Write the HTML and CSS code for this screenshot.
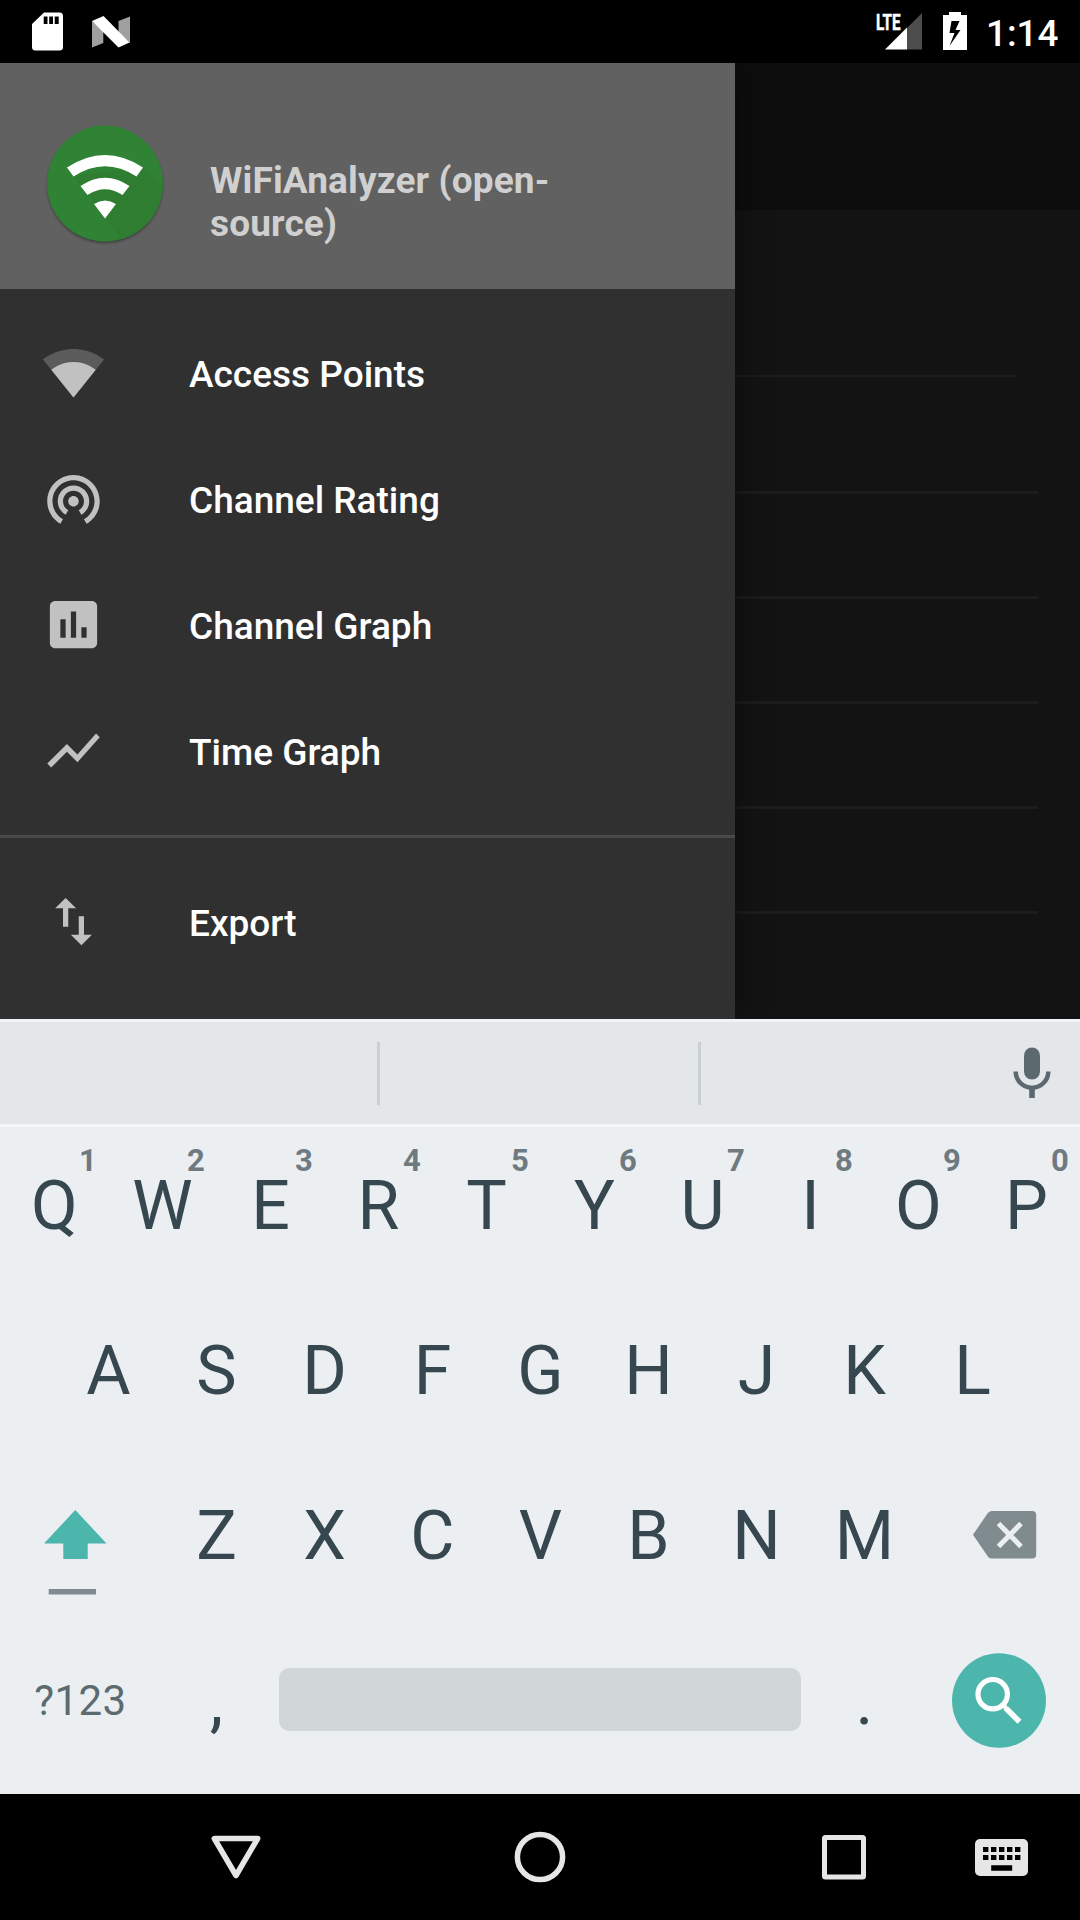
FILE: index.html
```html
<!DOCTYPE html>
<html lang="en">
<head>
<meta charset="utf-8">
<title>WiFiAnalyzer</title>
<link rel="stylesheet" href="styles.css">
</head>
<body>
<div class="screen">
  <header class="status">
    <svg class="sd" width="31" height="38" viewBox="0 0 31 38"><path fill="#fff" fill-rule="evenodd" d="M12 .5H27.500Q31 .5 31 4V35Q31 38.500 27.500 38.500H3.500Q0 38.500 0 35V12ZM11.700 4.500V12H15.500V4.500ZM17.200 4.500V12H21V4.500ZM22.700 4.500V12H26.700V4.500Z"/></svg>
    <svg class="nougat" width="38" height="32" viewBox="0 0 38 32"><path fill="#a0a0a0" d="M0 5L11.300 15V27L0 31.500ZM26.500 5L38 .500V27L26.500 17Z"/><path fill="#fff" d="M0 5L11.500 0L37.500 26.500L26.500 31.500Z"/></svg>
    <svg class="signal" width="46" height="38" viewBox="0 0 46 38"><path fill="#4d4d4d" d="M31 15L46 0V36.500H31Z"/><path fill="#fff" d="M9 36.500L31 14.500V36.500Z"/><text class="lte" x="0" y="16.500" textLength="24.500" lengthAdjust="spacingAndGlyphs">LTE</text></svg>
    <svg class="battery" width="24" height="38" viewBox="0 0 24 38"><path fill="#fff" fill-rule="evenodd" d="M6 0H18V3H24V38H0V3H6ZM8.500 9L6.500 21H11.500L6.500 34L17.500 18H12.500L16.500 9Z"/></svg>
    <span class="clock">1:14</span>
  </header>

  <main class="app">
    <div class="toolbar"></div>
    <div class="content">
      <div class="summary"></div>
      <div class="row"></div>
      <div class="row"></div>
      <div class="row"></div>
      <div class="row"></div>
      <div class="row"></div>
    </div>
    <nav class="drawer">
      <div class="drawer-head">
        <svg class="logo" width="126" height="126" viewBox="0 0 126 126">
          <defs><clipPath id="disc"><circle cx="63" cy="62.500" r="58"/></clipPath></defs>
          <circle class="logo-shadow" cx="63" cy="64.500" r="57.500"/>
          <circle cx="63" cy="62.500" r="58" fill="#308234"/>
          <path clip-path="url(#disc)" fill="#2e7d31" d="M32 55L101 46L130 75V130H88L63 97Z"/>
          <path fill="#fff" d="M25 46.500Q63 21.500 101 46.500L94.500 55.500Q63 35 31.500 55.500ZM38.500 65Q63 48.500 87.500 65L80.500 74Q63 62.500 45.500 74ZM52 83Q63 76 74 83L63 97.500Z"/>
        </svg>
        <div class="title">WiFiAnalyzer (open-<br>source)</div>
      </div>
      <div class="group">
        <a class="item"><svg viewBox="0 0 24 24"><path fill-opacity=".3" d="M12.010 21.490L23.640 7c-.45-.34-4.930-4-11.640-4C5.280 3 .81 6.660.36 7l11.630 14.490.01.01.01-.01z"/><path d="M3.530 10.950l8.460 10.540.01.01.01-.01 8.460-10.540C20.040 10.620 16.810 8 12 8c-4.810 0-8.040 2.620-8.470 2.950z"/></svg><span>Access Points</span></a>
        <a class="item"><svg viewBox="0 0 24 24"><path d="M12 11c-1.100 0-2 .9-2 2s.9 2 2 2 2-.9 2-2-.9-2-2-2zm6 2c0-3.310-2.690-6-6-6s-6 2.690-6 6c0 2.220 1.210 4.150 3 5.190l1-1.740c-1.190-.7-2-1.970-2-3.450 0-2.210 1.790-4 4-4s4 1.790 4 4c0 1.480-.81 2.750-2 3.450l1 1.740c1.790-1.040 3-2.970 3-5.190zM12 3C6.480 3 2 7.480 2 13c0 3.700 2.010 6.920 4.990 8.650l1-1.730C5.610 18.530 4 15.960 4 13c0-4.420 3.580-8 8-8s8 3.580 8 8c0 2.960-1.610 5.530-4 6.920l1 1.730c2.990-1.730 5-4.950 5-8.650 0-5.520-4.480-10-10-10z"/></svg><span>Channel Rating</span></a>
        <a class="item"><svg viewBox="0 0 24 24"><path d="M19 3H5c-1.100 0-2 .9-2 2v14c0 1.100.9 2 2 2h14c1.100 0 2-.9 2-2V5c0-1.100-.9-2-2-2zM9 17H7v-7h2v7zm4 0h-2V7h2v10zm4 0h-2v-4h2v4z"/></svg><span>Channel Graph</span></a>
        <a class="item"><svg viewBox="0 0 24 24"><path d="M3.500 18.490l6-6.010 4 4L22 6.920l-1.410-1.410-7.090 7.970-4-4L2 16.990z"/></svg><span>Time Graph</span></a>
      </div>
      <div class="group">
        <a class="item"><svg viewBox="0 0 24 24"><path d="M16 17.010V10h-2v7.010h-3L15 21l4-3.990h-3zM9 3L5 6.990h3V14h2V6.990h3L9 3z"/></svg><span>Export</span></a>
      </div>
    </nav>
  </main>

  <section class="keyboard">
    <div class="suggest">
      <div class="slot"></div>
      <div class="slot middle"></div>
      <div class="slot voice"><svg width="38" height="52" viewBox="0 0 38 52"><rect x="11" y="0.500" width="16" height="32" rx="8" fill="#5c6a70"/><path d="M2.700 24.500a16.300 16.300 0 0 0 32.600 0" fill="none" stroke="#5c6a70" stroke-width="4.500"/><path d="M16.200 41h5.600v10h-5.600z" fill="#5c6a70"/></svg></div>
    </div>
    <div class="keys">
      <div class="krow">
        <div class="key">Q<sup>1</sup></div><div class="key">W<sup>2</sup></div><div class="key">E<sup>3</sup></div><div class="key">R<sup>4</sup></div><div class="key">T<sup>5</sup></div><div class="key">Y<sup>6</sup></div><div class="key">U<sup>7</sup></div><div class="key">I<sup>8</sup></div><div class="key">O<sup>9</sup></div><div class="key">P<sup>0</sup></div>
      </div>
      <div class="krow">
        <div class="key">A</div><div class="key">S</div><div class="key">D</div><div class="key">F</div><div class="key">G</div><div class="key">H</div><div class="key">J</div><div class="key">K</div><div class="key">L</div>
      </div>
      <div class="krow">
        <div class="key wide shift"><svg width="63" height="85" viewBox="0 0 63 85"><path fill="#4db6ac" d="M31.300 0L62.500 33.500H43.700V49H19.300V33.500H0Z"/><path fill="#808b91" d="M4.700 79H52V84.500H4.700Z"/></svg></div>
        <div class="key">Z</div><div class="key">X</div><div class="key">C</div><div class="key">V</div><div class="key">B</div><div class="key">N</div><div class="key">M</div>
        <div class="key wide delete"><svg width="64" height="48" viewBox="0 0 64 48"><path fill="#808b8f" d="M18.500 0H59Q63.200 0 63.200 4V43.500Q63.200 47.500 59 47.500H18.500Q16 47.500 14.500 45L0 23.700L14.500 2.500Q16 0 18.500 0Z"/><path d="M25.500 12.500L48 35.500M48 12.500L25.500 35.500" stroke="#ebeff2" stroke-width="5"/></svg></div>
      </div>
      <div class="krow bottom">
        <div class="key wide symbols">?123</div>
        <div class="key">,</div>
        <div class="space"></div>
        <div class="key">.</div>
        <div class="key wide enter"><svg width="95" height="95" viewBox="0 0 95 95"><ellipse cx="47" cy="47.500" rx="47" ry="47.300" fill="#4db6ac"/><circle cx="40.700" cy="41.200" r="14.700" fill="none" stroke="#fff" stroke-width="5.200"/><path d="M50.200 51.500L51.700 54.500V57L65.500 70.700L69.500 66.700L56.200 53.500H53.700Z" fill="#fff"/><path d="M51.200 51.500L53.700 54" stroke="#fff" stroke-width="4"/></svg></div>
      </div>
    </div>
  </section>

  <footer class="navbar">
    <svg class="back" width="50" height="44" viewBox="0 0 50 44"><path d="M3.300 3.500H46.700L25 40.500Z"/></svg>
    <svg class="home" width="52" height="52" viewBox="0 0 52 52"><circle cx="26" cy="26" r="22.600"/></svg>
    <svg class="recent" width="44" height="45" viewBox="0 0 44 45"><rect x="2.500" y="2.500" width="39" height="39.500" rx="1"/></svg>
    <svg class="ime" width="53" height="37" viewBox="0 0 53 37"><rect width="53" height="37" rx="5"/><path class="caps" d="M8 10.500H46M8 18.500H46"/><path class="bar" d="M16.200 29H37.200"/></svg>
  </footer>
</div>
</body>
</html>
```
FILE: styles.css
```css
* { box-sizing: border-box; }
body { margin: 0; background: #000; font-family: Roboto, "Noto Sans", sans-serif; }
svg { display: block; flex: none; overflow: visible; }

.screen { width: 1080px; height: 1920px; display: flex; flex-direction: column; overflow: hidden; }

/* Status bar */
.status { height: 63px; flex: none; display: flex; align-items: flex-start; padding: 12px 20px 0 32px; background: #000; position: relative; z-index: 2; }
.nougat { margin: 4px 0 0 29px; }
.signal { margin: 1px 0 0 auto; }
.lte { font: 700 22px Roboto, sans-serif; fill: #fff; stroke: #fff; stroke-width: .5; }
.battery { margin-left: 21px; }
.clock { margin: 0 0 0 19px; width: 74px; font-size: 36.75px; font-weight: 500; line-height: 44px; color: #fff; white-space: nowrap; }

/* Dimmed list behind the drawer */
.app { height: 956px; flex: none; position: relative; overflow: hidden; background: #131313; }
.toolbar { height: 147px; background: #0d0d0d; }
.content { padding-right: 42px; }
.summary { height: 167px; margin-right: 21px; border-bottom: 2px solid #1c1c1c; }
.row { height: 105px; border-bottom: 3px solid #1c1c1c; }
.summary + .row { height: 117px; }

/* Navigation drawer */
.drawer { position: absolute; top: 0; left: 0; width: 735px; height: 100%; background: #303030; box-shadow: 0 0 32px rgba(0, 0, 0, .4); }
.drawer-head { height: 226px; display: flex; align-items: flex-start; padding: 58px 42px 0; gap: 42px; background: #616161; }
.logo-shadow { fill: #000; opacity: .4; filter: blur(1.5px); }
.title { padding-top: 38px; font-size: 37px; font-weight: 700; line-height: 43px; letter-spacing: .14px; color: #d0d0d0; }
.group { padding: 21px 0; }
.group + .group { border-top: 3px solid #494949; }
.item { display: flex; height: 126px; align-items: flex-start; padding: 31px 42px 0; gap: 84px; color: #fff; font-size: 37px; font-weight: 500; line-height: 68px; }
.item svg { width: 63px; height: 63px; fill: #c1c1c1; }

/* Keyboard */
.keyboard { height: 775px; flex: none; display: flex; flex-direction: column; background: #ebeff2; color: #37474f; }
.suggest { height: 108px; flex: none; display: grid; grid-template-columns: 377px 324px 1fr; align-items: center; background: #e3e7ea; border-top: 3px solid #f2f3f5; border-bottom: 3px solid #f5f8fa; }
.slot { height: 63px; display: flex; align-items: center; }
.middle { border-left: 3px solid #cacfd2; border-right: 3px solid #cacfd2; }
.voice { justify-content: flex-end; padding-right: 29px; }
.keys { display: flex; flex-direction: column; }
.krow { height: 165px; display: flex; justify-content: center; }
.key { width: 108px; flex: none; position: relative; text-align: center; font-size: 68px; line-height: 80px; padding: 39px 0 0 1px; }
.key sup { position: absolute; top: 14px; left: 68px; width: 40px; font-size: 31px; font-weight: 700; line-height: 40px; color: #6e7a80; }
.wide { width: 162px; }
.shift { padding: 53px 0 0 44px; }
.delete { padding: 54px 0 0 55px; }
.symbols { padding: 54px 1px 0 0; font-size: 42px; line-height: 50px; letter-spacing: .4px; color: #5c6b70; }
.space { width: 522px; height: 63px; margin: 46px 9px 0; border-radius: 10px; background: #d1d6d9; }
.enter { padding: 31px 0 0 34px; }

/* System navigation */
.navbar { height: 126px; flex: none; display: flex; align-items: center; padding: 0 52px 0 211px; background: #000; fill: none; stroke: #e6e6e6; stroke-width: 5.500; stroke-linejoin: round; }
.home { margin-left: 253px; }
.recent { margin-left: 256px; stroke-width: 5; }
.ime { margin-left: auto; fill: #e6e6e6; stroke: none; }
.caps { stroke: #000; stroke-width: 5.200; stroke-dasharray: 5.400 2.600; }
.bar { stroke: #000; stroke-width: 5.500; }
```
